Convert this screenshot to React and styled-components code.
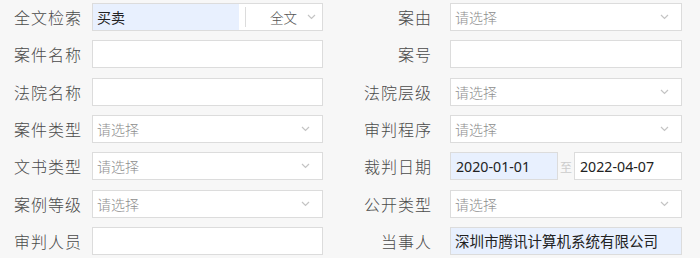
import React from 'react';
import styled, { createGlobalStyle } from 'styled-components';

const GlobalStyle = createGlobalStyle`
    body {
        margin: 0;
        background: #f7f7f7;
        font-family: "Noto Sans", "Noto Sans CJK SC", sans-serif;
    }
`;

const rows = [
    {
        left: { label: '全文检索', type: 'fulltext', value: '买卖' },
        right: { label: '案由', type: 'select' },
    },
    {
        left: { label: '案件名称', type: 'input' },
        right: { label: '案号', type: 'input' },
    },
    {
        left: { label: '法院名称', type: 'input' },
        right: { label: '法院层级', type: 'select' },
    },
    {
        left: { label: '案件类型', type: 'select' },
        right: { label: '审判程序', type: 'select' },
    },
    {
        left: { label: '文书类型', type: 'select' },
        right: { label: '裁判日期', type: 'date', from: '2020-01-01', to: '2022-04-07' },
    },
    {
        left: { label: '案例等级', type: 'select' },
        right: { label: '公开类型', type: 'select' },
    },
    {
        left: { label: '审判人员', type: 'input' },
        right: { label: '当事人', type: 'input', value: '深圳市腾讯计算机系统有限公司' },
    },
];

const Chevron = () => (
    <svg width="9" height="6" viewBox="0 0 9 6">
        <path d="M1 1l3.5 3.5L8 1" fill="none" stroke="#c4c4c4" strokeWidth="1.2" />
    </svg>
);

const Field = ({ field, width }) => {
    if (field.type === 'select') {
        return (
            <Box $width={width}>
                <Placeholder>请选择</Placeholder>
                <Arrow $right={12}><Chevron /></Arrow>
            </Box>
        );
    }
    if (field.type === 'fulltext') {
        return (
            <Box $width={width}>
                <Filled>{field.value}</Filled>
                <Divider />
                <Mode>全文</Mode>
                <Arrow $right={6}><Chevron /></Arrow>
            </Box>
        );
    }
    if (field.type === 'date') {
        return (
            <DateGroup $width={width}>
                <DateBox $filled>{field.from}</DateBox>
                <To>至</To>
                <DateBox>{field.to}</DateBox>
            </DateGroup>
        );
    }
    return (
        <Box $width={width} $filled={!!field.value}>
            {field.value && <Value>{field.value}</Value>}
        </Box>
    );
};

const App = () => {
    return (
        <>
            <GlobalStyle />
            <Form>
                {rows.map((row, i) => (
                    <Row key={i}>
                        <LeftLabel>{row.left.label}</LeftLabel>
                        <Field field={row.left} width={231} />
                        <RightLabel>{row.right.label}</RightLabel>
                        <Field field={row.right} width={232} />
                    </Row>
                ))}
            </Form>
        </>
    );
};

export default App;

const Form = styled.div`
    display: flex;
    flex-direction: column;
    gap: 9.33px;
    padding: 3px 0 0 14px;
`;

const Row = styled.div`
    display: flex;
    align-items: center;
    height: 28px;
`;

const LeftLabel = styled.div`
    width: 78px;
    font-family: "Noto Sans CJK SC", sans-serif;
    font-size: 16px;
    font-weight: 300;
    letter-spacing: 1px;
    color: #4a4a4a;
`;

const RightLabel = styled(LeftLabel)`
    width: 127px;
    padding-right: 18px;
    box-sizing: border-box;
    text-align: right;
`;

const Box = styled.div`
    position: relative;
    display: flex;
    align-items: center;
    width: ${p => p.$width}px;
    height: 28px;
    box-sizing: border-box;
    border: 1px solid #dcdcdc;
    background: ${p => (p.$filled ? '#e8f0fe' : '#fff')};
    overflow: hidden;
`;

const Placeholder = styled.span`
    padding-left: 4px;
    font-family: "Noto Sans CJK SC", sans-serif;
    font-size: 14px;
    font-weight: 300;
    color: #8e8e8e;
`;

const Value = styled.span`
    padding-left: 4px;
    font-family: "Noto Sans CJK SC", sans-serif;
    font-size: 14.5px;
    color: #222;
    white-space: nowrap;
`;

const Filled = styled.div`
    flex: 0 0 146px;
    align-self: stretch;
    display: flex;
    align-items: center;
    padding-left: 4px;
    box-sizing: border-box;
    background: #e8f0fe;
    font-family: "Noto Sans CJK SC", sans-serif;
    font-size: 14px;
    color: #222;
`;

const Divider = styled.div`
    width: 1px;
    height: 20px;
    margin-left: 6px;
    background: #dcdcdc;
`;

const Mode = styled.span`
    margin-left: 24px;
    font-family: "Noto Sans CJK SC", sans-serif;
    font-size: 13.5px;
    font-weight: 300;
    color: #555;
`;

const Arrow = styled.span`
    position: absolute;
    right: ${p => p.$right}px;
    top: 50%;
    transform: translateY(-50%);
    display: flex;
`;

const DateGroup = styled.div`
    display: flex;
    align-items: center;
    width: ${p => p.$width}px;
    height: 28px;
`;

const DateBox = styled.div`
    display: flex;
    align-items: center;
    width: 108px;
    height: 28px;
    box-sizing: border-box;
    padding-left: 5px;
    border: 1px solid #dcdcdc;
    background: ${p => (p.$filled ? '#e8f0fe' : '#fff')};
    font-family: "Noto Sans", sans-serif;
    font-size: 14.2px;
    color: #222;
`;

const To = styled.span`
    width: 16px;
    text-align: center;
    font-family: "Noto Sans CJK SC", sans-serif;
    font-size: 12px;
    color: #ccc;
`;
